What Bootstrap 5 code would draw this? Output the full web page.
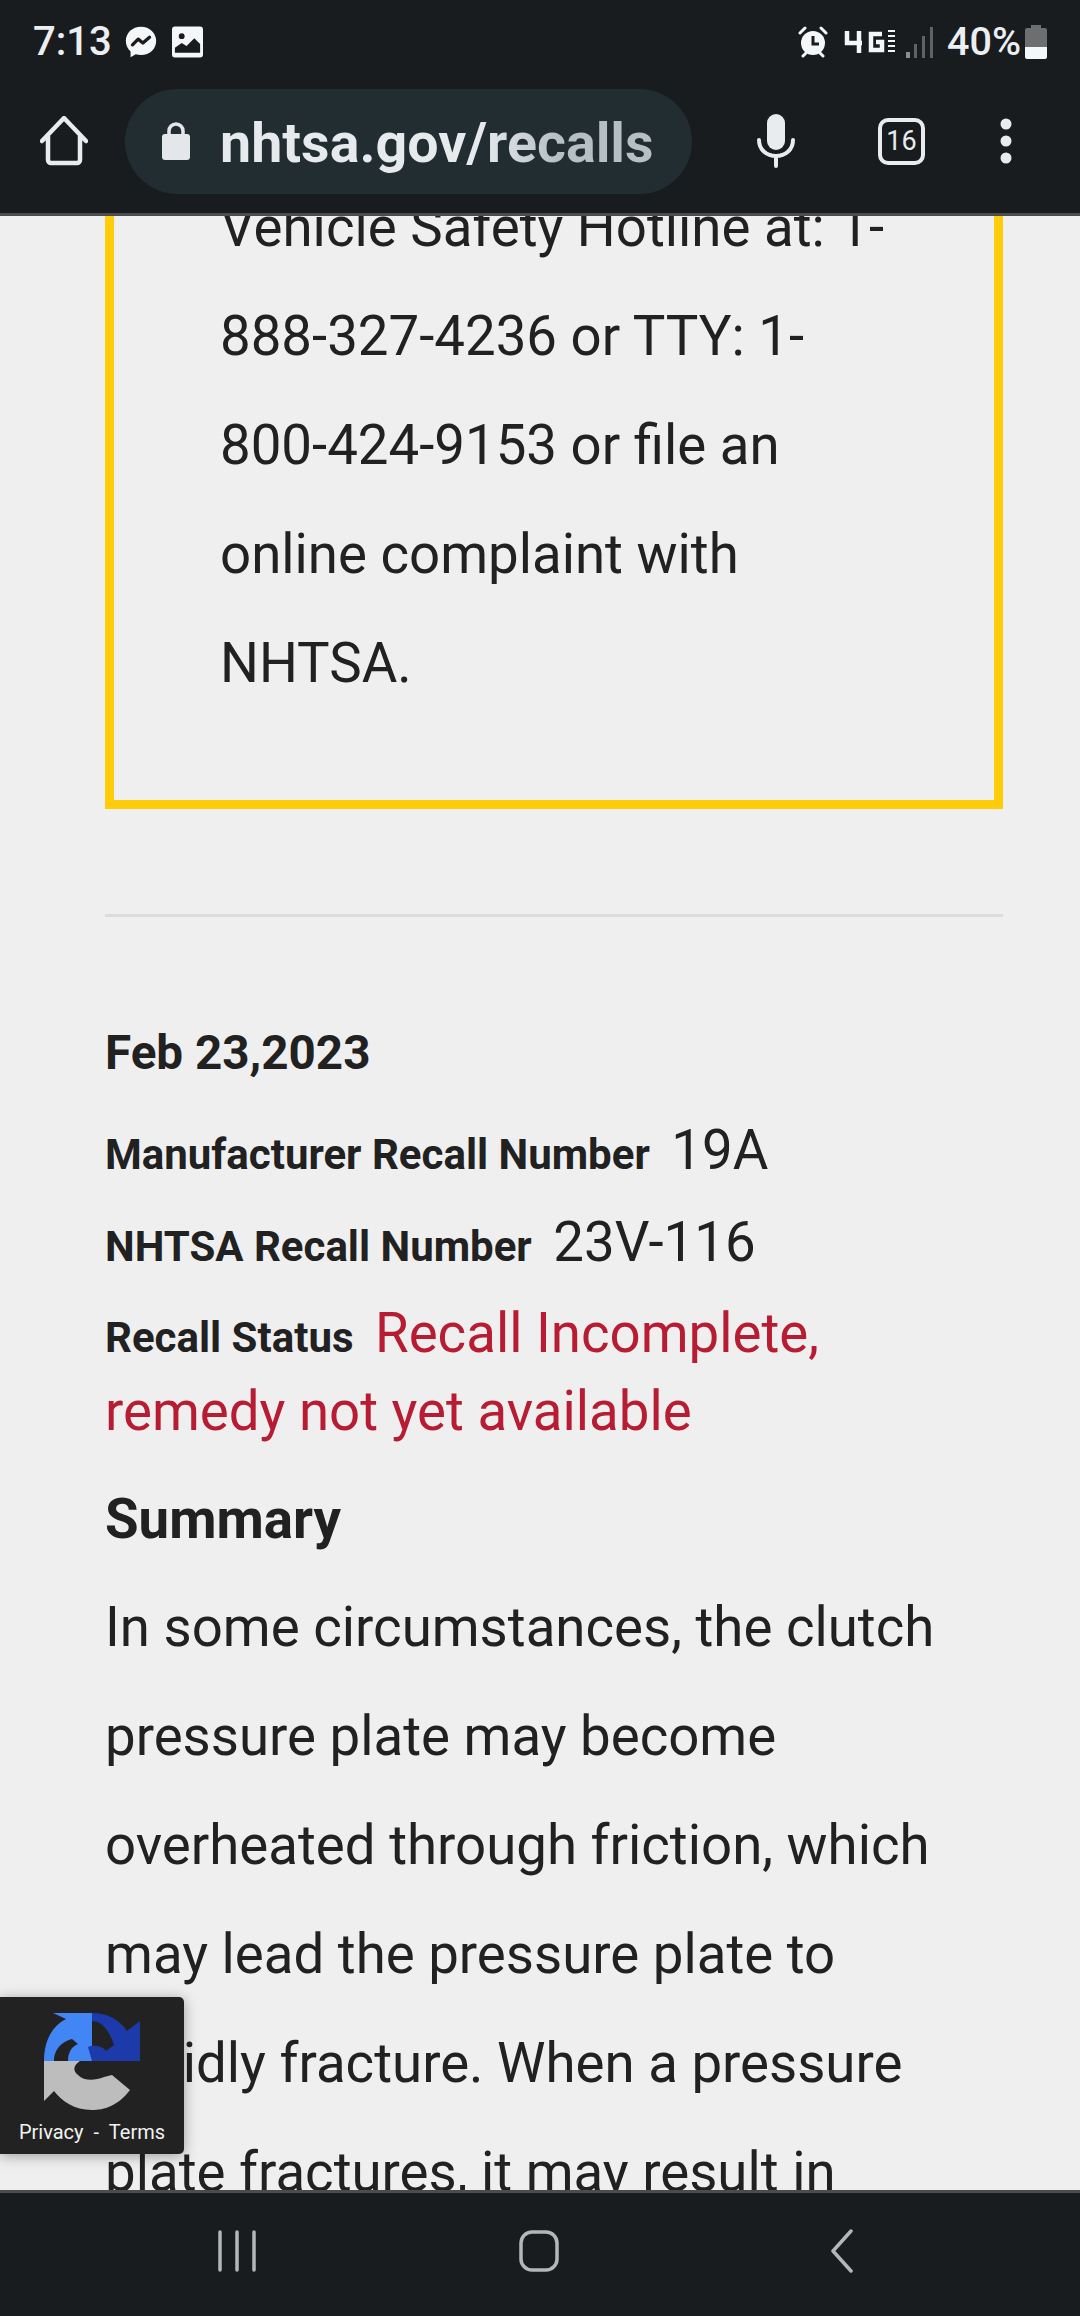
<!DOCTYPE html>
<html lang="en">
<head>
    <meta charset="UTF-8">
    <meta name="viewport" content="width=device-width, initial-scale=1">
    <title>Recalls | NHTSA</title>

    <!-- Bootstrap CSS -->
    <link href="https://cdn.jsdelivr.net/npm/bootstrap@5.3.0/dist/css/bootstrap.min.css" rel="stylesheet">
    <style>
        html, body { height: 2316px; overflow: hidden; }
        body { font-family: Roboto, "Liberation Sans", sans-serif; background: #efefef; color: #212121; }
        .phone { height: 2316px; }
        .chrome-top { height: 216px; background: #191c1f; border-bottom: 3px solid #4a4c4f; color: #eceff1; }
        .status-row { height: 86px; padding: 17px 33px 0 33px; }
        .status-time { font-size: 40px; font-weight: 500; line-height: 50px; }
        .status-pct { font-size: 39.5px; font-weight: 500; line-height: 50px; margin-left: 13px; }
        .icon-msg { margin-left: 11px; }
        .icon-pic { margin-left: 13px; }
        .icon-signal { margin-left: 10px; }
        .url-row { height: 110px; padding: 0 46px 0 40px; }
        .url-pill { width: 567px; height: 105px; margin-left: 37px; background: #222d31; border-radius: 53px; padding-left: 37px; }
        .url-text { font-size: 55.6px; font-weight: 700; line-height: 1.2; margin-left: 30px; padding-top: 4px; background: linear-gradient(90deg, #e6eaed 60%, #b6bfc4 78%); -webkit-background-clip: text; background-clip: text; color: transparent; }
        .icon-mic { margin-left: 65px; }
        .tab-count { width: 47px; height: 47px; margin-left: 83px; border: 4.5px solid #e9ecee; border-radius: 10px; font-size: 27px; line-height: 1; color: #e9ecee; }
        .icon-dots { margin-left: 74px; }
        .scroll-area { min-height: 0; }
        .page-body { margin-top: -52px; padding: 0 77px 0 105px; }
        .warn-box { border: 9px solid #ffcc0a; padding: 0 93px 82px 106px; font-size: 54.6px; line-height: 109px; }
        .rule { margin: 105px 0 0; border: 0; border-top: 3px solid #dcdcdc; opacity: 1; }
        .recall-date { font-size: 47.6px; font-weight: 700; line-height: 60px; margin: 106px 0 0; }
        .recall-row { margin: 0; font-size: 54.6px; line-height: 72.5px; }
        .recall-row b { font-size: 42px; font-weight: 700; margin-right: 8px; }
        .row-first { margin-top: 31px; }
        .row-next { margin-top: 14px; }
        .alert-text { color: #b71c32; }
        .summary-head { font-size: 54.6px; font-weight: 700; line-height: 70px; margin: 37px 0 0; }
        .summary-text { font-size: 54.6px; line-height: 109px; margin: 19px 0 0; }
        .captcha { left: 0; top: 1997px; width: 184px; height: 157px; background: #222; border-radius: 0 5px 5px 0; box-shadow: 0 2px 14px rgba(0,0,0,.35); color: #f2f2f2; font-size: 20px; line-height: 24px; }
        .captcha svg { margin-top: 16px; }
        .captcha-label { margin-top: 9px; }
        .chrome-bottom { height: 126px; background: #191c1f; border-top: 3px solid #4a4c4f; }
        .nav-recent { margin-left: 217px; margin-top: -8px; }
        .nav-home { margin-left: 262px; margin-top: -8px; }
        .nav-back { margin-left: 271px; margin-top: -8px; }
    </style>
</head>
<body>
    <div class="phone d-flex flex-column position-relative overflow-hidden">

        <!-- browser toolbar -->
        <header class="chrome-top flex-shrink-0">
            <div class="status-row d-flex align-items-start justify-content-between">
                <div class="d-flex align-items-center">
                    <span class="status-time">7:13</span>
                    <svg class="icon-msg" width="36" height="36" viewBox="0 0 38 38"><path fill="#f4f6f7" d="M19 3C9.8 3 3 9.6 3 18c0 4.500 1.900 8.300 5 11v6l5.500-3c1.700.5 3.500.800 5.500.800 9.200 0 16-6.500 16-14.800S28.200 3 19 3z"/><path fill="none" stroke="#191c1f" stroke-width="3.500" stroke-linecap="round" stroke-linejoin="round" d="M10 22l6-6 5 4 7-6"/></svg>
                    <svg class="icon-pic" width="31" height="32" viewBox="0 0 32 32"><rect width="32" height="32" rx="3" fill="#f4f6f7"/><circle cx="10" cy="10" r="3" fill="#191c1f"/><path fill="#191c1f" d="M3 27v-5l7-5 5 3 8-8 6 6v9z"/></svg>
                </div>
                <div class="d-flex align-items-center">
                    <svg width="30" height="32" viewBox="0 0 30 32"><circle cx="15" cy="17" r="12" fill="#f4f6f7"/><path fill="none" stroke="#191c1f" stroke-width="3" d="M15 10v8h6"/><path stroke="#f4f6f7" stroke-width="3" stroke-linecap="round" d="M2 7l5-5M28 7l-5-5M5 30l3-3M25 30l-3-3"/></svg>
                    <svg class="ms-3" width="52" height="24" viewBox="0 0 52 24"><path fill="none" stroke="#f4f6f7" stroke-width="4.500" d="M3 1v12h15M15 1v22M38 4H27v16h11v-8h-6"/><path fill="none" stroke="#f4f6f7" stroke-width="1.800" d="M44 1h7M44 6h7M44 11h7M44 16h7M44 21h7"/></svg>
                    <svg class="icon-signal" width="28" height="32" viewBox="0 0 28 32"><rect x="0" y="26" width="4" height="6" fill="#8b8d8f"/><rect x="8" y="18" width="3" height="14" fill="#5f6163"/><rect x="16" y="10" width="3" height="22" fill="#5f6163"/><rect x="24" y="1" width="3" height="31" fill="#5f6163"/></svg>
                    <span class="status-pct">40%</span>
                    <svg class="ms-1" width="22" height="34" viewBox="0 0 22 34"><path fill="#6d6e70" d="M6 0h10v3h4a2 2 0 0 1 2 2v17H0V5a2 2 0 0 1 2-2h4z"/><path fill="#f4f6f7" d="M0 22h22v10a2 2 0 0 1-2 2H2a2 2 0 0 1-2-2z"/></svg>
                </div>
            </div>
            <div class="url-row d-flex align-items-center">
                <svg width="48" height="50" viewBox="0 0 48 50"><path fill="none" stroke="#e9ecee" stroke-width="4.500" stroke-linejoin="round" stroke-linecap="round" d="M2 25L24 2l22 23M8 20v24a3 3 0 0 0 3 3h26a3 3 0 0 0 3-3V20"/></svg>
                <div class="url-pill d-flex align-items-center flex-shrink-0">
                    <svg width="28" height="38" viewBox="0 0 28 38"><path fill="none" stroke="#e3e7ea" stroke-width="3.500" d="M7 14V9a7 7 0 0 1 14 0v5"/><rect y="12" width="28" height="26" rx="3" fill="#e3e7ea"/></svg>
                    <span class="url-text">nhtsa.gov/recalls</span>
                </div>
                <svg class="icon-mic flex-shrink-0" width="38" height="54" viewBox="0 0 38 54"><rect x="10" y="0" width="18" height="36" rx="9" fill="#e9ecee"/><path fill="none" stroke="#e9ecee" stroke-width="4" stroke-linecap="round" d="M2 26c0 10 8 16 17 16s17-6 17-16M19 42v10"/></svg>
                <span class="tab-count d-flex align-items-center justify-content-center flex-shrink-0">16</span>
                <svg class="icon-dots flex-shrink-0" width="14" height="46" viewBox="0 0 14 46"><circle cx="7" cy="6" r="5.500" fill="#e9ecee"/><circle cx="7" cy="23" r="5.500" fill="#e9ecee"/><circle cx="7" cy="40" r="5.500" fill="#e9ecee"/></svg>
            </div>
        </header>

        <!-- page content, scrolled part way down -->
        <main class="scroll-area flex-grow-1 overflow-hidden">
            <div class="page-body">
                <div class="warn-box">Vehicle Safety Hotline at: 1-888-327-4236 or TTY: 1-800-424-9153 or file an online complaint with NHTSA.</div>
                <hr class="rule">
                <p class="recall-date">Feb 23,2023</p>
                <p class="recall-row row-first"><b>Manufacturer Recall Number</b> 19A</p>
                <p class="recall-row row-next"><b>NHTSA Recall Number</b> 23V-116</p>
                <p class="recall-row row-next"><b>Recall Status</b> <span class="alert-text">Recall Incomplete, remedy not yet available</span></p>
                <h2 class="summary-head">Summary</h2>
                <p class="summary-text">In some circumstances, the clutch pressure plate may become overheated through friction, which may lead the pressure plate to rapidly fracture. When a pressure plate fractures, it may result in</p>
            </div>
        </main>

        <!-- reCAPTCHA badge -->
        <aside class="captcha position-absolute text-center">
            <svg width="96" height="98" viewBox="0 0 96 98">
                <path fill="#4285f4" d="M0 48C0 28 8 13 22 6L9 0h39v48H24c0-8 3-14 10-17l-6-5C14 30 10 40 10 48z"/>
                <path fill="#1c3aa9" d="M48 0c15 0 27 6 35 18l13-10v40H48L44 34c4-2 14-2 18 4l8-6C64 14 56 8 48 8z"/>
                <path fill="#bdbdbd" d="M0 48h36c-6 4-8 9-2 14 6 6 16 6 26 2l8-2 18 15C74 93 60 97 48 97 30 97 18 88 10 78L0 88z"/>
            </svg>
            <div class="captcha-label">Privacy&nbsp; - &nbsp;Terms</div>
        </aside>

        <!-- android nav bar -->
        <footer class="chrome-bottom flex-shrink-0 d-flex align-items-center position-relative">
            <svg class="nav-recent" width="40" height="42" viewBox="0 0 40 42"><path stroke="#b4b6b8" stroke-width="3.500" stroke-linecap="round" d="M3 2v38M20 2v38M37 2v38"/></svg>
            <svg class="nav-home" width="40" height="42" viewBox="0 0 40 42"><rect x="2" y="2" width="36" height="38" rx="11" fill="none" stroke="#b4b6b8" stroke-width="3.500"/></svg>
            <svg class="nav-back" width="24" height="44" viewBox="0 0 24 44"><path fill="none" stroke="#b4b6b8" stroke-width="3.500" stroke-linecap="round" stroke-linejoin="round" d="M21 2L3 22l18 20"/></svg>
        </footer>
    </div>

    <!-- Bootstrap JS -->
    <script src="https://cdn.jsdelivr.net/npm/bootstrap@5.3.0/dist/js/bootstrap.bundle.min.js"></script>
</body>
</html>
